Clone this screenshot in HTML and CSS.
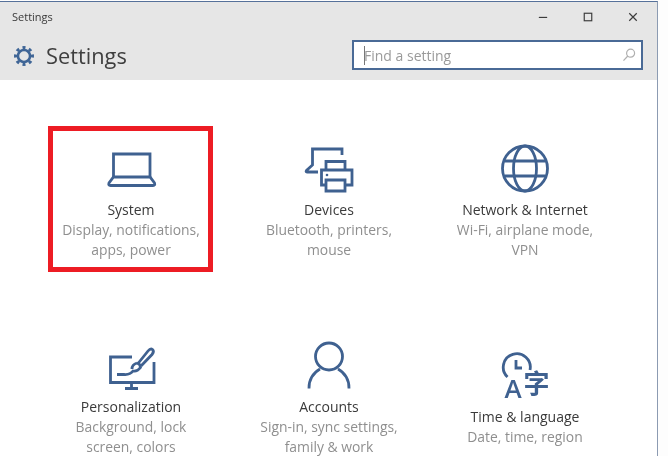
FILE: index.html
```html
<!DOCTYPE html>
<html lang="en">
<head>
<meta charset="utf-8">
<title>Settings</title>
<link rel="stylesheet" href="styles.css">
</head>
<body>
<div class="window">
  <header class="header">
    <div class="titlebar">
      <span class="window-title">Settings</span>
      <div class="controls">
        <svg class="control" viewBox="0 0 12 12"><path d="M1 6.5H11"/></svg>
        <svg class="control" viewBox="0 0 12 12"><rect x="1.5" y="1.5" width="9" height="9"/></svg>
        <svg class="control" viewBox="0 0 12 12"><path d="M1.5 1.5L10.5 10.5M10.5 1.5L1.5 10.5"/></svg>
      </div>
    </div>
    <div class="toolbar">
      <div class="brand">
        <svg class="gear" viewBox="0 0 24 24">
          <circle class="gear-ring" cx="12" cy="12" r="6.6"/>
          <circle class="gear-teeth" cx="12" cy="12" r="9.2" pathLength="80" stroke-dasharray="4.6 5.4" stroke-dashoffset="2.3"/>
        </svg>
        <h1 class="brand-name">Settings</h1>
      </div>
      <div class="search">
        <span class="caret"></span>
        <span class="placeholder">Find a setting</span>
        <svg class="search-icon" viewBox="0 0 14 14"><circle cx="8.6" cy="5.2" r="4"/><path d="M5.8 8L1.5 12.6"/></svg>
      </div>
    </div>
  </header>
  <main class="grid">
    <section class="tile">
      <span class="highlight"></span>
      <div class="icon icon-short">
        <svg class="glyph" viewBox="1 0 60 60"><path d="M13.5 37V14H50V37"/><path d="M13.5 37H50L54.5 43Q55.500 45.500 53 45.500H10.500Q8 45.500 9 43Z"/></svg>
      </div>
      <h2 class="tile-name">System</h2>
      <p class="tile-desc">Display, notifications, apps, power</p>
    </section>
    <section class="tile">
      <div class="icon icon-short">
        <svg class="glyph" viewBox="0 0 60 60">
          <path d="M43 15V9H13.500V25L7.500 30.500Q6.500 32 8 32H19"/>
          <path d="M27 30V21.500H46V30"/>
          <path d="M27 45H22.500V30H53V45H46"/>
          <path d="M27 40H46V51H27Z"/>
          <circle class="fill" cx="28" cy="35" r="1.300"/>
        </svg>
      </div>
      <h2 class="tile-name">Devices</h2>
      <p class="tile-desc">Bluetooth, printers, mouse</p>
    </section>
    <section class="tile">
      <div class="icon icon-short">
        <svg class="glyph" viewBox="0 0 60 60">
          <circle cx="30" cy="28.500" r="22.500"/>
          <ellipse cx="30" cy="28.500" rx="11.500" ry="22.500"/>
          <path d="M10 21H50M10 36H50"/>
        </svg>
      </div>
      <h2 class="tile-name">Network &amp; Internet</h2>
      <p class="tile-desc">Wi-Fi, airplane mode, VPN</p>
    </section>
    <section class="tile">
      <div class="icon">
        <svg class="glyph" viewBox="1 0 60 60">
          <path d="M32 21H10.500V46.500H54V26"/>
          <path d="M31.500 46.500V52.500M25 52.500H38"/>
          <path d="M38 27.500L48 15Q50.500 12 52.500 13.500Q54.500 15.500 52 18.500L41 30"/>
          <path d="M37 27Q40.500 28 40.500 31.500Q37 36 33 35Q30 39 24 38.500H17"/>
          <path d="M37 27Q32 28.500 32 33"/>
        </svg>
      </div>
      <h2 class="tile-name">Personalization</h2>
      <p class="tile-desc">Background, lock screen, colors</p>
    </section>
    <section class="tile">
      <div class="icon">
        <svg class="glyph" viewBox="0 0 60 60">
          <circle cx="30" cy="20.500" r="13.500"/>
          <path d="M10 52.500A21 21 0 0 1 21 33M39 33A21 21 0 0 1 50 52.500"/>
        </svg>
      </div>
      <h2 class="tile-name">Accounts</h2>
      <p class="tile-desc">Sign-in, sync settings, family &amp; work</p>
    </section>
    <section class="tile">
      <div class="icon icon-tall">
        <svg class="glyph glyph-tall" viewBox="0 0 60 70">
          <path d="M12.500 41A13.500 13.500 0 1 1 35 34"/>
          <path d="M21 24V32H27"/>
          <text class="glyph-latin" x="9.500" y="62">A</text>
          <text class="glyph-cjk" x="28.500" y="57">字</text>
        </svg>
      </div>
      <h2 class="tile-name">Time &amp; language</h2>
      <p class="tile-desc">Date, time, region</p>
    </section>
  </main>
</div>
</body>
</html>
```
FILE: styles.css
```css
* {
  box-sizing: border-box;
}

html,
body {
  margin: 0;
  height: 100%;
  background: #fdfdfd;
  overflow: hidden;
}

body {
  font-family: "Open Sans", "Noto Sans", "Liberation Sans", sans-serif;
}

.window {
  width: 658px;
  height: 455px;
  margin-top: 1px;
  border-top: 1px solid #56719a;
  border-right: 1px solid #8c9bb2;
  background: #ffffff;
  overflow: hidden;
}

.header {
  height: 78px;
  background: #e6e6e6;
  filter: blur(0.35px);
}

.titlebar {
  display: flex;
  justify-content: space-between;
  align-items: center;
  height: 28px;
  padding-left: 12px;
  padding-right: 19px;
}

.window-title {
  font-size: 11px;
  color: #3a3a3a;
}

.controls {
  display: flex;
  gap: 35px;
  padding-top: 2px;
}

.control {
  width: 10px;
  height: 10px;
  fill: none;
  stroke: #3c3c3c;
  stroke-width: 1.400;
}

.toolbar {
  display: flex;
  justify-content: space-between;
  align-items: center;
  height: 50px;
  padding-left: 13px;
  padding-right: 14px;
}

.brand {
  display: flex;
  align-items: center;
  gap: 11px;
  padding-top: 2px;
}

.gear {
  display: block;
  width: 22px;
  height: 22px;
  fill: none;
  stroke: #3f6596;
}

.gear-ring {
  stroke-width: 2.800;
}

.gear-teeth {
  stroke-width: 3.400;
}

.brand-name {
  margin: 0;
  font-size: 21.800px;
  font-weight: 400;
  color: #3f3f3f;
  line-height: 28px;
}

.search {
  display: flex;
  align-items: center;
  width: 291px;
  height: 30px;
  padding-left: 10px;
  padding-right: 5px;
  border: 2px solid #4a6a96;
  background: #ffffff;
}

.caret {
  width: 1px;
  height: 19px;
  background: #777777;
}

.placeholder {
  flex: 1;
  margin-left: -1px;
  font-size: 14px;
  color: #9a9a9a;
}

.search-icon {
  width: 14px;
  height: 14px;
  fill: none;
  stroke: #b0b0b0;
  stroke-width: 1.200;
}

.grid {
  display: grid;
  grid-template-columns: 200px 196px 196px;
  grid-auto-rows: 196px;
  padding-top: 60px;
  padding-left: 31px;
}

.tile {
  position: relative;
  display: flex;
  flex-direction: column;
  align-items: center;
  text-align: center;
}

.highlight {
  position: absolute;
  top: -14px;
  left: 17px;
  width: 165px;
  height: 146px;
  border: 5px solid #ed1c24;
}

.icon {
  display: flex;
  justify-content: center;
  height: 61px;
  filter: blur(0.35px);
}

.icon-short {
  height: 60px;
}

.icon-tall {
  height: 71px;
}

.glyph {
  display: block;
  width: 60px;
  height: 60px;
  fill: none;
  stroke: #3f6190;
  stroke-width: 2.800;
}

.glyph-tall {
  height: 70px;
}

.fill {
  fill: #3f6190;
  stroke: none;
}

.glyph-latin,
.glyph-cjk {
  fill: #3f6190;
  stroke: none;
}

.glyph-latin {
  font-family: "Open Sans", sans-serif;
  font-size: 26px;
  font-weight: 600;
}

.glyph-cjk {
  font-family: "Noto Sans CJK SC", sans-serif;
  font-size: 26px;
  font-weight: 700;
}

.tile-name {
  margin: 0;
  font-size: 14px;
  font-weight: 400;
  line-height: 20px;
  color: #3a3a3a;
  filter: blur(0.4px);
}

.tile-desc {
  width: 156px;
  margin: 0;
  font-size: 13.900px;
  line-height: 20px;
  color: #8f8f8f;
  filter: blur(0.4px);
}
```
